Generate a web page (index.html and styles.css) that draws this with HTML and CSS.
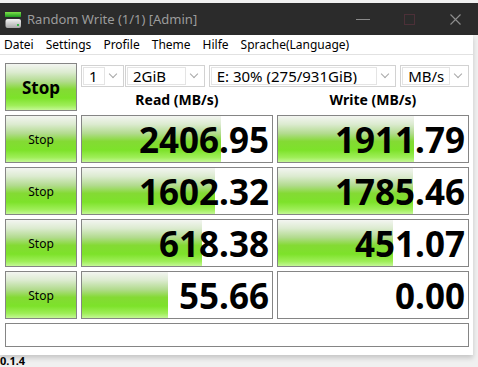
FILE: index.html
```html
<!DOCTYPE html>
<html lang="de">

<head>
    <meta charset="UTF-8" />
    <meta name="viewport" content="width=device-width, initial-scale=1" />
    <title>Random Write (1/1) [Admin]</title>

    <link rel="stylesheet" href="styles.css">
</head>

<body>

    <header class="titlebar">
        <svg class="app-icon" width="17" height="17" viewBox="0 0 17 17">
            <defs>
                <linearGradient id="gTop" x1="0" y1="0" x2="0" y2="1">
                    <stop offset="0" stop-color="#7ee04a" />
                    <stop offset="1" stop-color="#1f9a20" />
                </linearGradient>
                <linearGradient id="gDrive" x1="0" y1="0" x2="0" y2="1">
                    <stop offset="0" stop-color="#f4f4f4" />
                    <stop offset="1" stop-color="#a8a8a8" />
                </linearGradient>
            </defs>
            <rect x="0" y="0" width="16" height="5" fill="url(#gTop)" />
            <rect x="0.5" y="7" width="15.5" height="9" rx="2" fill="url(#gDrive)" />
            <rect x="12" y="12" width="2" height="2" fill="#39b54a" />
        </svg>
        <span class="title">Random Write (1/1) [Admin]</span>

        <div class="controls">
            <span class="ctl"><svg width="14" height="10" viewBox="0 0 14 10"><line x1="0" y1="5.5" x2="14" y2="5.5" stroke="#8a8a8a" stroke-width="1" /></svg></span>
            <span class="ctl"><svg width="11" height="11" viewBox="0 0 11 11"><rect x="0.5" y="0.5" width="10" height="10" fill="none" stroke="#4c3038" stroke-width="1" /></svg></span>
            <span class="ctl"><svg width="11" height="11" viewBox="0 0 11 11"><path d="M0.5 0.5 L10.5 10.5 M10.5 0.5 L0.5 10.5" stroke="#8f8f8f" stroke-width="1.1" /></svg></span>
        </div>
    </header>

    <div class="window">
        <nav class="menu">
            <span>Datei</span>
            <span>Settings</span>
            <span>Profile</span>
            <span>Theme</span>
            <span>Hilfe</span>
            <span>Sprache(Language)</span>
        </nav>

        <main class="board">
            <button class="btn btn-big">Stop</button>

            <div class="setup">
                <div class="combos">
                    <div class="combo c-count"><span class="field">1</span><span class="arrow"></span></div>
                    <div class="combo c-size"><span class="field">2GiB</span><span class="arrow"></span></div>
                    <div class="combo c-drive"><span class="field">E: 30% (275/931GiB)</span><span class="arrow"></span></div>
                    <div class="combo c-unit"><span class="field">MB/s</span><span class="arrow"></span></div>
                </div>
                <div class="heads">
                    <span>Read (MB/s)</span>
                    <span>Write (MB/s)</span>
                </div>
            </div>

            <button class="btn">Stop</button>
            <div class="cell"><div class="bar" style="width: 139px"></div><span class="val">2406.95</span></div>
            <div class="cell"><div class="bar" style="width: 136px"></div><span class="val">1911.79</span></div>

            <button class="btn">Stop</button>
            <div class="cell"><div class="bar" style="width: 133px"></div><span class="val">1602.32</span></div>
            <div class="cell"><div class="bar" style="width: 135px"></div><span class="val">1785.46</span></div>

            <button class="btn">Stop</button>
            <div class="cell"><div class="bar" style="width: 120px"></div><span class="val">618.38</span></div>
            <div class="cell"><div class="bar" style="width: 115px"></div><span class="val">451.07</span></div>

            <button class="btn">Stop</button>
            <div class="cell"><div class="bar" style="width: 86px"></div><span class="val">55.66</span></div>
            <div class="cell"><span class="val">0.00</span></div>

            <div class="comment"></div>
        </main>
    </div>

    <div class="behind">0.1.4</div>

</body>

</html>
```

FILE: styles.css
```css
:root {
    --frame: #2b2b2b;
    --edge: #858585;
    --green: linear-gradient(to bottom, #f3f5f1 0%, #dcebd0 18%, #b2db8e 38%, #84da34 55%, #7de22a 74%, #9eee58 90%, #c4f896 100%);
}

body {
    margin: 0;
    padding-top: 3px;
    background: #f0f0f0;
    font-family: 'Noto Sans', 'DejaVu Sans', sans-serif;
    color: #000;
    overflow: hidden;
}

.titlebar {
    height: 32px;
    background: var(--frame);
    display: flex;
    align-items: center;
    padding-left: 5px;
}

.app-icon {
    margin-top: 2px;
}

.title {
    margin-left: 5px;
    font-size: 13px;
    color: #9c9c9c;
}

.controls {
    margin-left: auto;
    display: flex;
    align-items: center;
}

.ctl {
    width: 46px;
    display: flex;
    justify-content: center;
    align-items: center;
}

.window {
    width: 473px;
    background: #fff;
    box-shadow: 0 3px 5px rgba(0, 0, 0, 0.18);
}

.menu {
    height: 19px;
    display: flex;
    align-items: center;
    padding-left: 4px;
    font-size: 12px;
    border-bottom: 1px solid #e2e2e2;
}

.menu span {
    margin-right: 12px;
}

.board {
    display: grid;
    grid-template-columns: 72px 192px 192px;
    grid-template-rows: repeat(5, 48px) 24px;
    gap: 4px;
    padding: 8px 0 8px 5px;
}

.btn {
    margin: 0;
    padding: 0;
    border: 1px solid var(--edge);
    background: var(--green);
    font-family: inherit;
    font-size: 12px;
    color: #000;
}

.btn-big {
    font-size: 17px;
    font-weight: bold;
}

.setup {
    grid-column: 2 / 4;
    display: flex;
    flex-direction: column;
}

.combos {
    display: flex;
    height: 22px;
    margin-top: 2px;
}

.combo {
    display: flex;
    border: 1px solid #d2d2d2;
    background: #fff;
    box-sizing: border-box;
    font-size: 15px;
}

.combo .field {
    flex: 1;
    margin: 1px 0 1px 1px;
    border: 1px solid #e4e4e4;
    padding-left: 5px;
    line-height: 16px;
    white-space: nowrap;
    overflow: hidden;
}

.combo .arrow {
    width: 18px;
    position: relative;
}

.combo .arrow::after {
    content: '';
    position: absolute;
    left: 5px;
    top: 5px;
    width: 5px;
    height: 5px;
    border-right: 1px solid #a8a8a8;
    border-bottom: 1px solid #a8a8a8;
    transform: rotate(45deg);
}

.c-count { width: 43px; margin-right: 1px; }
.c-size { width: 80px; margin-right: 4px; }
.c-drive { width: 188px; margin-right: 4px; }
.c-unit { width: 69px; }

.heads {
    flex: 1;
    display: grid;
    grid-template-columns: 192px 192px;
    gap: 4px;
    align-items: center;
    text-align: center;
    font-size: 14px;
    font-weight: bold;
    padding-top: 1px;
}

.cell {
    position: relative;
    border: 1px solid var(--edge);
    background: #fff;
    display: flex;
    align-items: center;
    justify-content: flex-end;
    overflow: hidden;
}

.bar {
    position: absolute;
    left: 0;
    top: 0;
    bottom: 0;
    background: var(--green);
}

.val {
    position: relative;
    padding-right: 3px;
    font-size: 35px;
    font-weight: bold;
    line-height: 35px;
}

.comment {
    grid-column: 1 / 4;
    box-sizing: border-box;
    border: 1px solid var(--edge);
}

.behind {
    position: relative;
    margin: 0;
    font-size: 11px;
    font-weight: bold;
    line-height: 11px;
}
```
